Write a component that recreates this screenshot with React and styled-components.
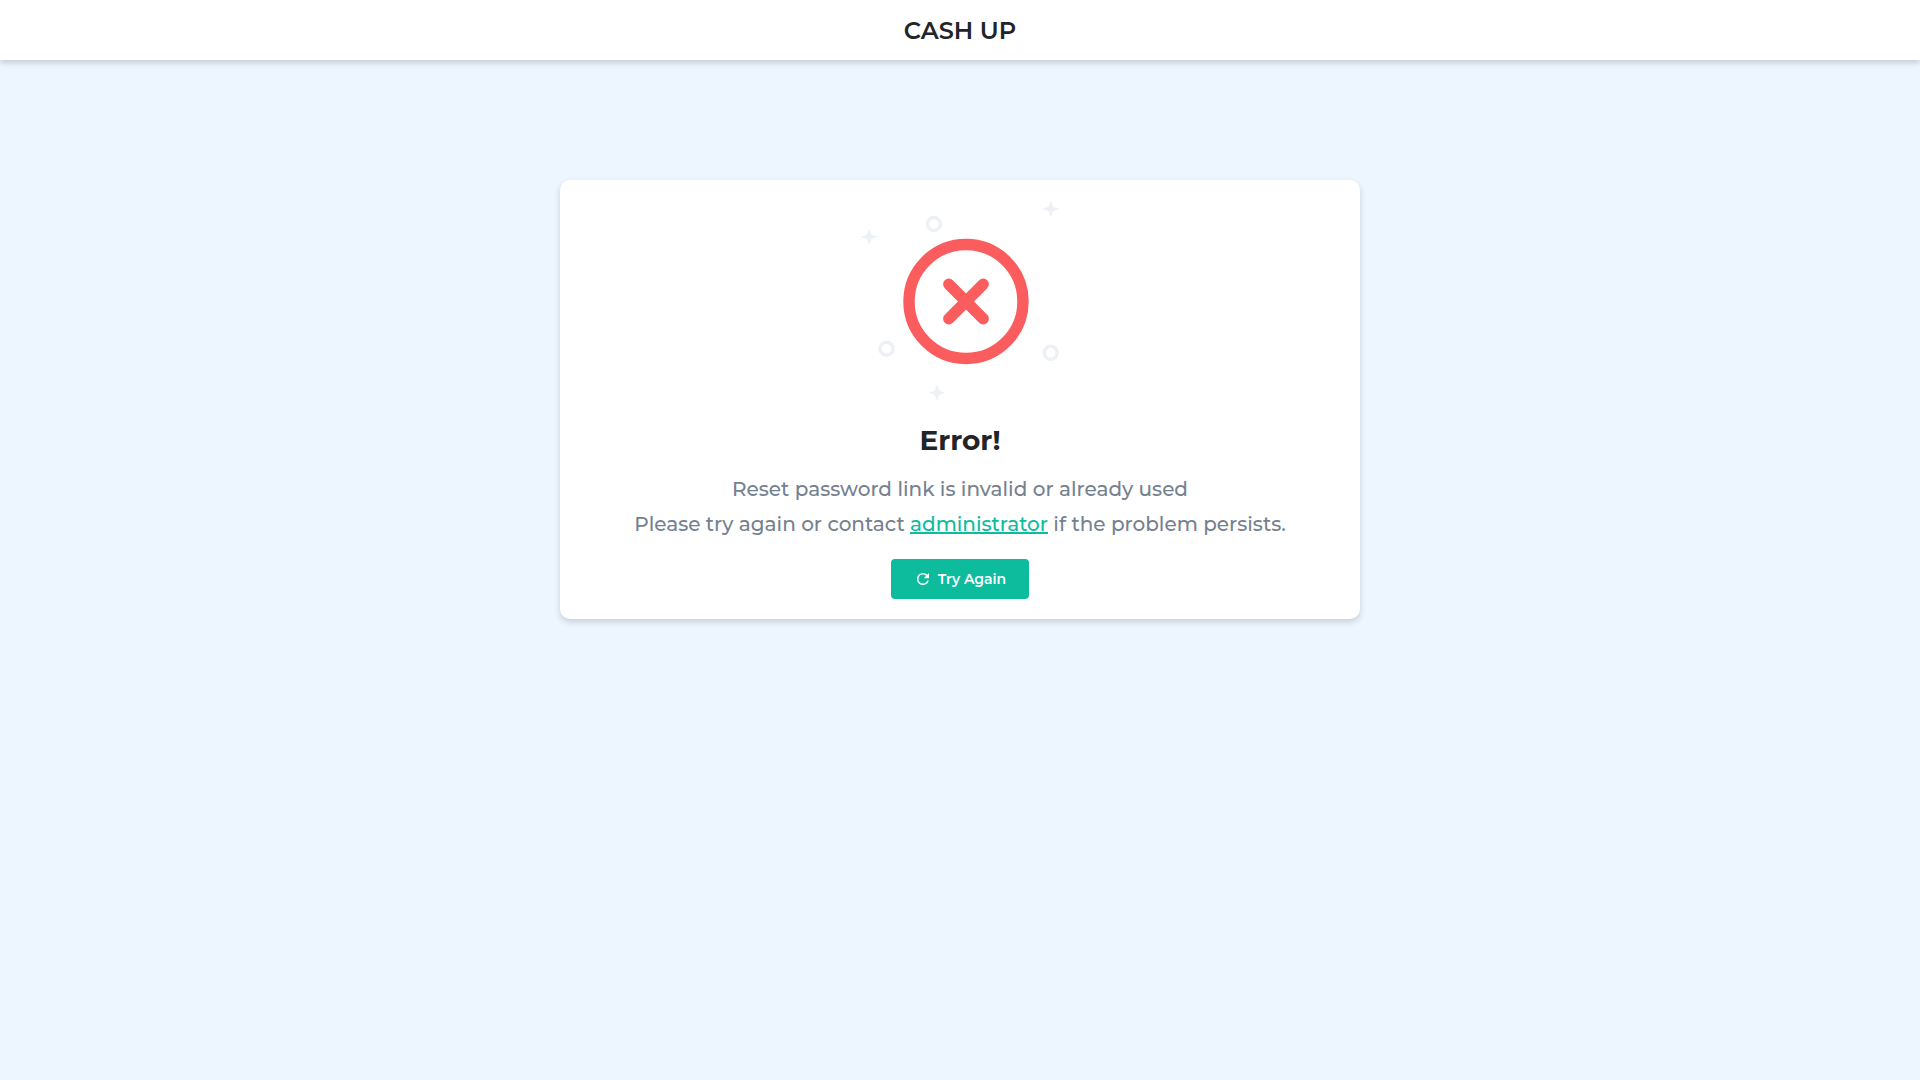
import React from "react";
import styled, { createGlobalStyle } from "styled-components";

const GlobalStyle = createGlobalStyle`
  *, *::before, *::after { box-sizing: border-box; }
  body {
    margin: 0;
    min-height: 100vh;
    background: #edf5ff;
    color: #212529;
    font-family: Montserrat, Inter, "Open Sans", sans-serif;
  }
`;

const Header = styled.header`
  display: flex;
  align-items: center;
  justify-content: center;
  height: 60px;
  padding-top: 2px;
  background: #fff;
  box-shadow: 0 3px 6px rgba(0, 0, 0, 0.16);
`;

const Brand = styled.h1`
  margin: 0;
  font-size: 24px;
  line-height: 32px;
  font-weight: 600;
`;

const Main = styled.main`
  display: flex;
  justify-content: center;
  padding: 120px 20px 40px;
`;

const Card = styled.section`
  display: flex;
  flex-direction: column;
  align-items: center;
  width: 100%;
  max-width: 800px;
  padding: 20px;
  border-radius: 10px;
  background: #fff;
  box-shadow: 0 3px 6px rgba(0, 0, 0, 0.16);
  text-align: center;
`;

const Illustration = styled.svg`
  display: block;
  width: 200px;
  height: 202px;
  overflow: visible;
`;

const Heading = styled.h2`
  margin: 20px 0 14px;
  font-size: 28px;
  line-height: 36px;
  font-weight: 700;
`;

const Message = styled.p`
  margin: 0;
  color: #75818f;
  font-size: 20px;
  line-height: 35px;
  font-weight: 500;
`;

const AdminLink = styled.a`
  color: #0cbc9d;
  text-decoration: underline;
`;

const RetryButton = styled.button`
  display: inline-flex;
  align-items: center;
  justify-content: center;
  gap: 6px;
  height: 40px;
  margin-top: 17px;
  padding: 0 23px;
  border: 0;
  border-radius: 4px;
  background: #0cbc9d;
  color: #fff;
  font-family: inherit;
  font-size: 14px;
  line-height: 20px;
  font-weight: 600;
  cursor: pointer;
`;

const RetryIcon = styled.svg`
  display: block;
  width: 18px;
  height: 18px;
`;

const rings = [
  [74, 24],
  [26.5, 148.7],
  [190.7, 152.8],
];

const stars = [
  [190.8, 9],
  [9.2, 36.7],
  [77, 192.8],
];

function ErrorIllustration() {
  return (
    <Illustration viewBox="0 0 200 202" aria-hidden="true">
      {rings.map(([x, y]) => (
        <circle key={x} cx={x} cy={y} r="6.5" fill="none" stroke="#edf1f5" strokeWidth="3.4" />
      ))}
      {stars.map(([x, y]) => (
        <path
          key={x}
          transform={`translate(${x} ${y})`}
          fill="#edf1f5"
          d="M0-8.5 2.2-2.2 8.5 0 2.2 2.2 0 8.5-2.2 2.2-8.5 0-2.2-2.2Z"
        />
      ))}
      <circle cx="106" cy="101.5" r="57" fill="none" stroke="#fb5c5d" strokeWidth="11.4" />
      <path
        d="M88.8 84.3 123.2 118.7M123.2 84.3 88.8 118.7"
        fill="none"
        stroke="#fb5c5d"
        strokeWidth="11.4"
        strokeLinecap="round"
      />
    </Illustration>
  );
}

export default function App() {
  return (
    <>
      <GlobalStyle />
      <Header>
        <Brand>CASH UP</Brand>
      </Header>
      <Main>
        <Card>
          <ErrorIllustration />
          <Heading>Error!</Heading>
          <Message>Reset password link is invalid or already used</Message>
          <Message>
            Please try again or contact <AdminLink href="#administrator">administrator</AdminLink> if the
            problem persists.
          </Message>
          <RetryButton type="button">
            <RetryIcon viewBox="0 0 24 24" fill="currentColor" aria-hidden="true">
              <path d="M17.65 6.35A7.96 7.96 0 0 0 12 4a8 8 0 1 0 7.73 10h-2.08A6 6 0 1 1 12 6c1.66 0 3.14.69 4.22 1.78L13 11h7V4z" />
            </RetryIcon>
            Try Again
          </RetryButton>
        </Card>
      </Main>
    </>
  );
}
